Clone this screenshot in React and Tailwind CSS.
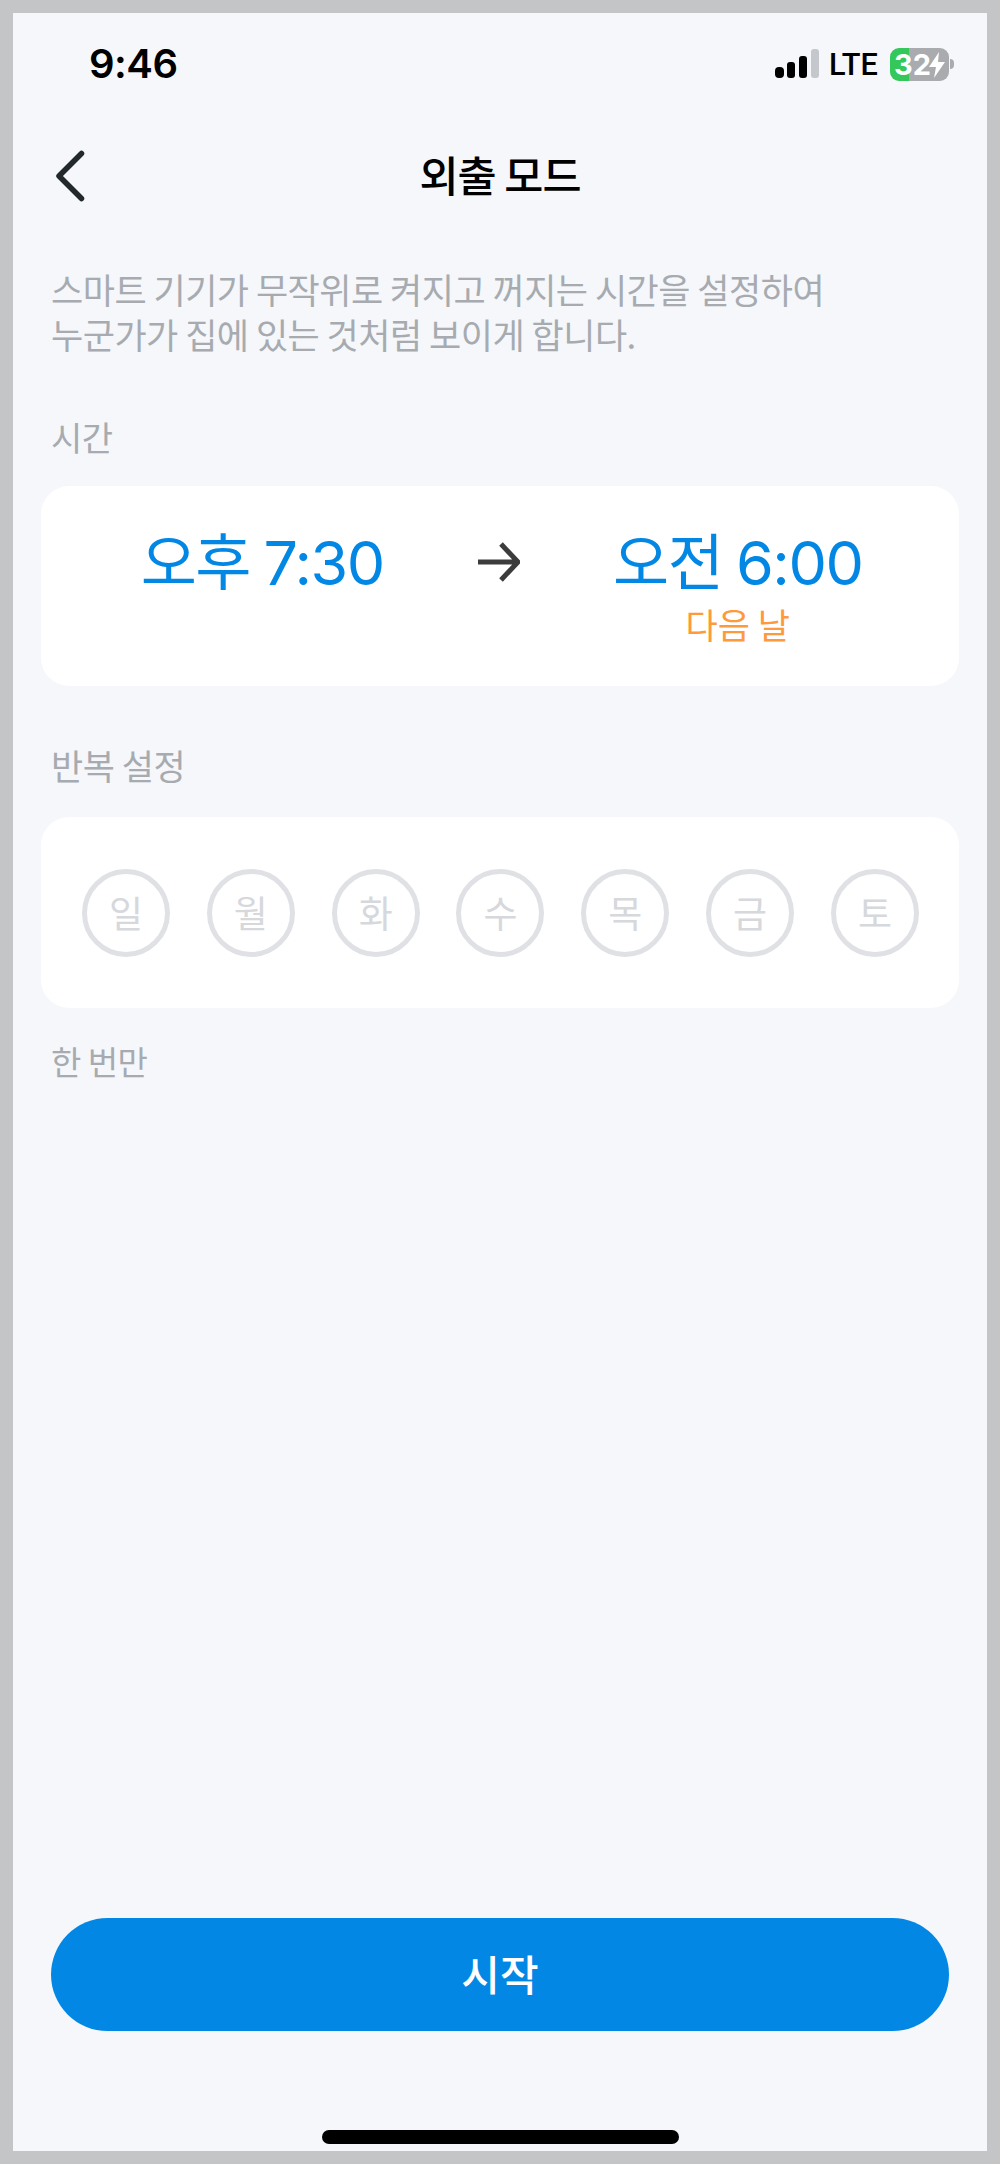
const FONT = "font-['Noto_Sans_CJK_KR','Noto_Sans',sans-serif]";
const DAYS = ["일", "월", "화", "수", "목", "금", "토"];

function StatusBar() {
  return (
    <div className="flex h-[69px] items-center justify-between pl-[76px] pr-[33px] pt-[9px]">
      <span className="font-['Inter',sans-serif] text-[40px] font-semibold leading-none tracking-[-0.5px] text-black">9:46</span>
      <div className="flex items-center">
        <svg width="45" height="30" viewBox="0 0 45 30" className="mr-[8px]">
          <rect x="0" y="18" width="9" height="11" rx="4" fill="#000" />
          <rect x="12" y="13" width="8" height="16" rx="3" fill="#000" />
          <rect x="24" y="7" width="8" height="22" rx="3" fill="#000" />
          <rect x="36" y="0" width="8" height="29" rx="3" fill="#c4c7cc" />
        </svg>
        <span className="mr-[11px] font-['Roboto',sans-serif] text-[32px] font-medium leading-none text-black [transform:scaleX(0.96)]">LTE</span>
        <div className="relative flex h-[33px] w-[59px] items-center rounded-[9px] bg-[linear-gradient(90deg,#34c759_33%,#a9abae_33%)] pl-[4px]">
          <span className="font-['Inter',sans-serif] text-[29px] font-bold leading-none text-white">32</span>
          <svg width="18" height="26" viewBox="0 0 18 26" className="absolute right-[3px] top-[4px]">
            <path d="M11 0 L1 15 H8 L6 26 L17 10 H10 Z" fill="#fff" />
          </svg>
        </div>
        <div className="ml-[1px] h-[10px] w-[4px] rounded-r-full bg-[#a9abae]" />
      </div>
    </div>
  );
}

function Header() {
  return (
    <div className="relative mt-[37px] flex h-[86px] items-center justify-center">
      <button className="absolute left-[41px] top-[17px]">
        <svg width="34" height="56" viewBox="0 0 34 56" fill="none" className="block">
          <path d="M27.5 5.5 L5 28 L27.5 50.5" stroke="#22282b" strokeWidth="5.5" strokeLinecap="round" strokeLinejoin="round" />
        </svg>
      </button>
      <h1 className="text-[42.5px] font-medium leading-none tracking-[-1px] text-black">외출 모드</h1>
    </div>
  );
}

function SectionLabel({ children, className }) {
  return <p className={`px-[38px] leading-[46px] tracking-[-0.5px] text-[#a7abb0] ${className}`}>{children}</p>;
}

function TimeCard() {
  return (
    <div className="mx-[28px] mt-[26px] grid h-[200px] grid-cols-[1fr_43px_1fr] rounded-[28px] bg-white px-[5px] pt-[33px]">
      <div className="text-center">
        <p className="font-['Inter','Noto_Sans_CJK_KR',sans-serif] text-[61px] leading-[88px] tracking-[-1.5px] [word-spacing:-2px] text-[#0288e4]">오후 7:30</p>
      </div>
      <svg width="43" height="40" viewBox="0 0 43 40" fill="none" className="-ml-[2px] mt-[23px]">
        <path d="M1 20 H40 M24 2 L41 20 L24 38" stroke="#3c3c3c" strokeWidth="5" />
      </svg>
      <div className="text-center">
        <p className="font-['Inter','Noto_Sans_CJK_KR',sans-serif] text-[61px] leading-[88px] tracking-[-1.5px] [word-spacing:-2px] text-[#0288e4]">오전 6:00</p>
        <p className="-mt-[5px] text-[35px] leading-[44px] text-[#ff9a3c]">다음 날</p>
      </div>
    </div>
  );
}

function RepeatCard() {
  return (
    <div className="mx-[28px] mt-[29px] flex h-[191px] items-center justify-between rounded-[28px] bg-white pl-[41px] pr-[40px]">
      {DAYS.map((day) => (
        <div key={day} className="flex h-[88px] w-[88px] items-center justify-center rounded-full border-[5px] border-[#dfe1e4] text-[37px] leading-none text-[#d6d8dc]">
          {day}
        </div>
      ))}
    </div>
  );
}

export default function App() {
  return (
    <div className={`h-[2164px] w-[1000px] overflow-hidden bg-[#c4c5c7] p-[13px] ${FONT}`}>
      <div className="flex h-[2138px] flex-col bg-[#f5f7fb]">
        <div className="h-[12px]" />
        <StatusBar />
        <Header />
        <p className="mt-[49px] px-[38px] text-[35px] leading-[45px] tracking-[-0.5px] text-[#a7abb0]">
          스마트 기기가 무작위로 켜지고 꺼지는 시간을 설정하여
          <br />
          누군가가 집에 있는 것처럼 보이게 합니다.
        </p>
        <SectionLabel className="mt-[58px] text-[34px]">시간</SectionLabel>
        <TimeCard />
        <SectionLabel className="mt-[56px] text-[35px]">반복 설정</SectionLabel>
        <RepeatCard />
        <SectionLabel className="mt-[30px] text-[33px]">한 번만</SectionLabel>
        <div className="flex-1" />
        <button className="mx-[38px] h-[113px] rounded-full bg-[#0288e4] pb-[4px] text-[42px] font-medium leading-none text-white">시작</button>
        <div className="mx-auto mb-[7px] mt-[99px] h-[14px] w-[357px] rounded-full bg-black" />
      </div>
    </div>
  );
}
